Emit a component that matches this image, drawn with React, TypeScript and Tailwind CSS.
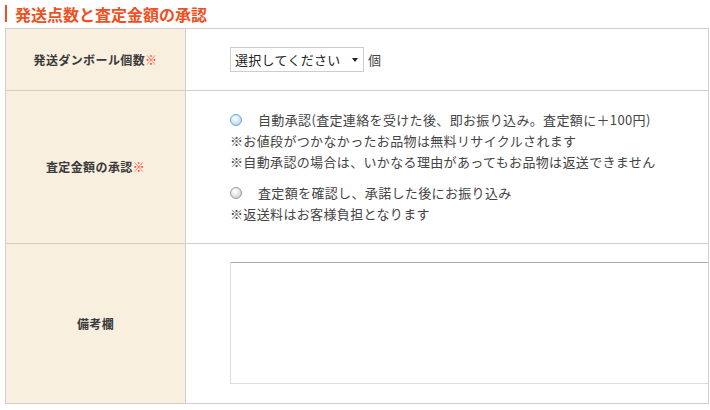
const font = "font-['Noto_Sans_CJK_JP','Noto_Sans',sans-serif]";

function Req() {
  return <span className="text-[#ff3c1e]">※</span>;
}

function Radio({ active }: { active?: boolean }) {
  return (
    <span
      className={
        active
          ? "inline-block w-[12px] h-[12px] rounded-full border border-[#6aa6d6] bg-[radial-gradient(circle_at_40%_35%,#f4faff_10%,#a9d3f2_90%)]"
          : "inline-block w-[12px] h-[12px] rounded-full border border-[#9a9a9a] bg-[radial-gradient(circle_at_40%_35%,#ffffff_10%,#c8c8c8_90%)]"
      }
    />
  );
}

function Label({ children }: { children: React.ReactNode }) {
  return (
    <div className="w-[180px] shrink-0 bg-[#f8efdf] border-r border-[#cfcfcf] flex items-center justify-center text-[12px] font-bold text-[#3a3a3a] tracking-[0.4px]">
      {children}
    </div>
  );
}

export default function App() {
  return (
    <div className={`${font} w-[710px] h-[410px] bg-white overflow-hidden pt-[5px]`}>
      <div className="flex items-center h-[17px] ml-[5px]">
        <div className="w-[2px] h-[17px] bg-[#f0501e]" />
        <h2 className="ml-[8px] text-[16px] font-bold text-[#f0501e] leading-none">発送点数と査定金額の承認</h2>
      </div>

      <div className="mt-[6px] ml-[5px] w-[704px] border border-[#cfcfcf] text-[#444]">
        <div className="flex h-[62px] border-b border-[#cfcfcf]">
          <Label>
            発送ダンボール個数<Req />
          </Label>
          <div className="flex-1 flex items-center pl-[44px] text-[13px]">
            <div className="flex items-center w-[134px] h-[25px] border border-[#cdcdcd] pl-[4px] pr-[5px] text-[#222]">
              <span className="flex-1 tracking-[0.3px]">選択してください</span>
              <span className="w-0 h-0 border-l-[3.5px] border-r-[3.5px] border-t-[4px] border-l-transparent border-r-transparent border-t-[#222]" />
            </div>
            <span className="ml-[4px]">個</span>
          </div>
        </div>

        <div className="flex h-[153px] border-b border-[#cfcfcf]">
          <Label>
            査定金額の承認<Req />
          </Label>
          <div className="flex-1 pl-[44px] pt-[18px] text-[13px] leading-[21px] tracking-[0.35px]">
            <div className="flex items-center">
              <Radio active />
              <span className="ml-[16px]">自動承認(査定連絡を受けた後、即お振り込み。査定額に＋100円)</span>
            </div>
            <div>※お値段がつかなかったお品物は無料リサイクルされます</div>
            <div>※自動承認の場合は、いかなる理由があってもお品物は返送できません</div>
            <div className="flex items-center mt-[10px]">
              <Radio />
              <span className="ml-[16px]">査定額を確認し、承諾した後にお振り込み</span>
            </div>
            <div>※返送料はお客様負担となります</div>
          </div>
        </div>

        <div className="flex h-[159px]">
          <Label>備考欄</Label>
          <div className="flex-1 pl-[44px] pt-[18px] overflow-hidden">
            <textarea className="block w-[500px] h-[122px] border border-[#dcdcdc] border-t-[#a8a8a8] resize-none outline-none" />
          </div>
        </div>
      </div>
    </div>
  );
}
